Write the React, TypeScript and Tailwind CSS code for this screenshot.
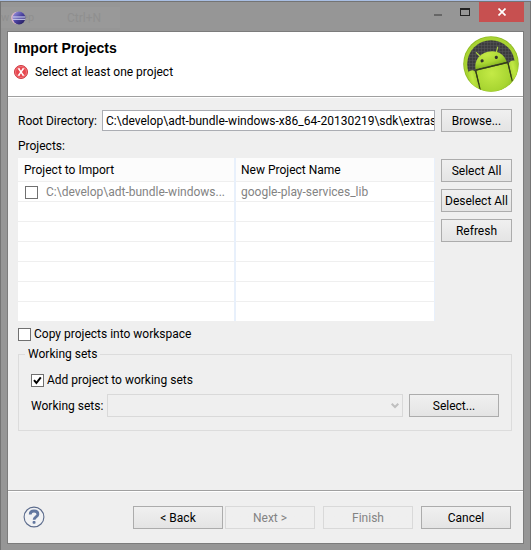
import type { ButtonHTMLAttributes, InputHTMLAttributes } from 'react'
import { clsx } from 'clsx'

function PushButton({ className, ...props }: ButtonHTMLAttributes<HTMLButtonElement>) {
  return (
    <button
      type="button"
      className={clsx(
        'h-[23px] shrink-0 border border-[#acacac] bg-linear-to-b from-[#f0f0f0] to-[#e4e4e4] text-center whitespace-nowrap text-black disabled:border-[#d9d9d9] disabled:from-[#efefef] disabled:to-[#efefef] disabled:text-[#838383]',
        className,
      )}
      {...props}
    />
  )
}

function CheckBox(props: InputHTMLAttributes<HTMLInputElement>) {
  return (
    <span className="relative block size-[13px] shrink-0">
      <input
        type="checkbox"
        className="peer block size-[13px] appearance-none border border-[#707070] bg-white"
        {...props}
      />
      <svg
        viewBox="0 0 13 13"
        className="pointer-events-none absolute inset-0 hidden size-[13px] peer-checked:block"
      >
        <path d="M3 6.2 5.4 9 9.8 3.4" fill="none" stroke="#000" strokeWidth="2" />
      </svg>
    </span>
  )
}

function EclipseIcon() {
  return (
    <svg viewBox="0 0 16 16" className="relative size-4">
      <defs>
        <linearGradient id="eclipse-ball" x1="0" y1="0" x2="1" y2="1">
          <stop offset="0" stopColor="#a59fe6" />
          <stop offset="0.5" stopColor="#4a429f" />
          <stop offset="1" stopColor="#1d1650" />
        </linearGradient>
      </defs>
      <circle cx="6.4" cy="8" r="6.2" fill="#e3b9c9" />
      <circle cx="8" cy="8" r="6.4" fill="url(#eclipse-ball)" />
      <path d="M1.8 7h12.4M1.8 9.3h12.4" stroke="#dfe3fa" strokeWidth="1.1" />
    </svg>
  )
}

function ErrorIcon() {
  return (
    <svg viewBox="0 0 14 14" className="size-[14px]">
      <circle cx="7" cy="7" r="6.5" fill="#e8474f" stroke="#cf3a42" />
      <circle cx="7" cy="7" r="5.5" fill="none" stroke="#f08a8e" strokeWidth="0.7" />
      <path d="M4.6 3.6 9.4 10.4M9.4 3.6 4.6 10.4" stroke="#fff" strokeWidth="1.6" />
      <path d="M3.8 3.6h2M8.4 3.6h2M3.8 10.4h2M8.4 10.4h2" stroke="#fff" strokeWidth="0.7" />
    </svg>
  )
}

function AndroidLogo() {
  return (
    <svg viewBox="0 0 56 56" className="size-14">
      <defs>
        <radialGradient id="android-body" cx="0.45" cy="0.2" r="0.9">
          <stop offset="0" stopColor="#c4ea46" />
          <stop offset="0.6" stopColor="#a9d632" />
          <stop offset="1" stopColor="#84b41e" />
        </radialGradient>
        <pattern id="android-mesh" width="3" height="3" patternUnits="userSpaceOnUse">
          <rect width="3" height="3" fill="#3c3c3e" />
          <path d="M0 0h3M0 0v3" stroke="#58585a" strokeWidth="1" />
        </pattern>
        <clipPath id="android-clip">
          <circle cx="28" cy="28" r="27.5" />
        </clipPath>
      </defs>
      <circle cx="28" cy="28" r="27.8" fill="#8fbb23" />
      <circle cx="28" cy="28" r="27" fill="#a8d332" />
      <circle cx="28" cy="28" r="23.8" fill="url(#android-mesh)" />
      <g clipPath="url(#android-clip)">
        <g transform="rotate(-13.5 29 30)" fill="url(#android-body)">
          <path d="M12.2 29.4C12.8 20.8 19.4 15.2 28.2 15.2s15.4 5.6 16 14.2z" />
          <path d="M12.6 31H44.6V62H12.6z" />
          <rect x="3.8" y="29.5" width="7.6" height="32" rx="3.8" />
          <rect x="45.8" y="29.5" width="7.6" height="32" rx="3.8" />
          <path d="M19.4 17.4 16.9 13.4M36.6 17.4 39 12.9" stroke="#b5dc42" strokeWidth="1.1" strokeLinecap="round" />
          <path d="M11.8 30.2H45.4M12 31V62M45.2 31V62" stroke="#33400f" strokeWidth="1.2" />
          <circle cx="20.6" cy="22.6" r="1.6" fill="#34342a" />
          <circle cx="35.2" cy="22.6" r="1.6" fill="#34342a" />
        </g>
      </g>
    </svg>
  )
}

function HelpIcon() {
  return (
    <svg viewBox="0 0 22 22" className="size-[22px]">
      <circle cx="11" cy="11" r="9.9" fill="#f1f2f4" stroke="#5b6b8c" strokeWidth="1.1" />
      <path d="M7.2 8.4C7.2 6.2 8.8 5 11 5s3.9 1.2 3.9 3.2c0 2.7-3.8 2.8-3.8 5.6" fill="none" stroke="#62779f" strokeWidth="2.8" />
      <rect x="9.6" y="15.1" width="2.9" height="2.7" rx="0.8" fill="#62779f" />
    </svg>
  )
}

function TitleBar() {
  return (
    <div className="flex h-[29px] items-start justify-between">
      <div className="relative mt-[5px] flex h-[21px] w-[119px] items-center bg-[#999] pl-[10px] text-[12px] text-[#8f8f8f]">
        <span className="absolute left-0 text-[11px] whitespace-nowrap">w Step</span>
        <EclipseIcon />
        <span className="ml-10">Ctrl+N</span>
      </div>
      <div className="mr-[6px] flex">
        <button type="button" aria-label="Minimize" className="flex h-5 w-[26px] justify-center">
          <span className="mt-3 h-[2px] w-2 bg-[#666]" />
        </button>
        <button type="button" aria-label="Maximize" className="flex h-5 w-[28px] justify-center">
          <span className="mt-[6px] h-2 w-[10px] border border-t-2 border-[#222]" />
        </button>
        <button type="button" aria-label="Close" className="flex h-5 w-[45px] items-center justify-center bg-[#c75050]">
          <svg viewBox="0 0 8 8" className="size-2">
            <path d="M0.5 0.5 7.5 7.5M7.5 0.5 0.5 7.5" stroke="#fff" strokeWidth="1.7" />
          </svg>
        </button>
      </div>
    </div>
  )
}

const emptyRows = [1, 2, 3, 4, 5]

function ProjectTable() {
  return (
    <table className="w-full table-fixed border-collapse bg-white text-left">
      <thead>
        <tr className="h-[23px] border-b border-[#efefef] bg-[#fcfcfc]">
          <th className="w-[217px] border-r-2 border-[#e8f0fb] p-0 pt-[2px] pl-[6px] font-normal">Project to Import</th>
          <th className="border-r border-[#e8f0fb] p-0 pt-[2px] pl-[5px] font-normal">New Project Name</th>
        </tr>
      </thead>
      <tbody>
        <tr className="h-5 border-b border-[#efefef] text-[#838383]">
          <td className="border-r-2 border-[#e8f0fb] p-0 pt-[2px] pl-[7px]">
            <label className="flex items-center gap-2">
              <CheckBox />
              <span className="truncate">C:\develop\adt-bundle-windows...</span>
            </label>
          </td>
          <td className="border-r border-[#e8f0fb] p-0 pt-[2px] pl-[5px]">google-play-services_lib</td>
        </tr>
        {emptyRows.map((row) => (
          <tr key={row} className="h-5 border-b border-[#efefef]">
            <td className="border-r-2 border-[#e8f0fb] p-0" />
            <td className="border-r border-[#e8f0fb] p-0" />
          </tr>
        ))}
        <tr className="h-5">
          <td className="border-r-2 border-[#e8f0fb] p-0" />
          <td className="border-r border-[#e8f0fb] p-0" />
        </tr>
      </tbody>
    </table>
  )
}

export default function App() {
  return (
    <div className="flex min-h-screen flex-col border-t border-[#a9bfe4] bg-[#969696] font-[Roboto,'Open_Sans',sans-serif] text-[12px] leading-4 text-black">
      <div className="flex grow flex-col border border-b-0 border-[#747474] pb-[6px]">
        <TitleBar />
        <main className="mx-[6px] flex grow flex-col border border-[#7c7c7c] bg-[#efefef]">
          {/* Banner */}
          <header className="flex h-[65px] items-start justify-between border-b border-[#a0a0a0] bg-white pr-1 pl-[6px]">
            <div>
              <h1 className="mt-2 font-['Liberation_Sans',sans-serif] text-[14px] leading-4 font-bold">Import Projects</h1>
              <p className="mt-2 flex items-center gap-[7px]">
                <ErrorIcon />
                Select at least one project
              </p>
            </div>
            <div className="mt-1">
              <AndroidLogo />
            </div>
          </header>

          <div className="grow border-t border-white pt-[11px] pr-[11px] pl-[10px]">
            {/* Root directory */}
            <div className="flex items-center gap-[6px]">
              <label htmlFor="root-directory" className="w-[78px] shrink-0 whitespace-nowrap">Root Directory:</label>
              <input
                id="root-directory"
                type="text"
                defaultValue="C:\develop\adt-bundle-windows-x86_64-20130219\sdk\extras"
                className="h-[21px] min-w-0 grow border border-[#abadb3] bg-white pl-[3px]"
              />
              <PushButton className="w-[71px]">Browse...</PushButton>
            </div>

            {/* Project list */}
            <p className="mt-[6px] mb-1">Projects:</p>
            <div className="flex items-start gap-[6px]">
              <div className="min-w-0 grow">
                <ProjectTable />
              </div>
              <div className="mt-px flex w-[71px] shrink-0 flex-col gap-[7px]">
                <PushButton>Select All</PushButton>
                <PushButton>Deselect All</PushButton>
                <PushButton>Refresh</PushButton>
              </div>
            </div>

            <label className="mt-[5px] flex items-center gap-[3px]">
              <CheckBox />
              Copy projects into workspace
            </label>

            <fieldset className="mt-1 border border-[#dcdcdc] pr-3 pb-[13px] pl-3">
              <legend className="-ml-[6px] px-[3px]">Working sets</legend>
              <label className="mt-[10px] flex items-center gap-[3px]">
                <CheckBox defaultChecked />
                Add project to working sets
              </label>
              <div className="mt-[6px] flex items-center">
                <label htmlFor="working-sets" className="w-[76px] shrink-0 whitespace-nowrap">Working sets:</label>
                <div className="relative min-w-0 grow">
                  <select
                    id="working-sets"
                    disabled
                    className="block h-[23px] w-full appearance-none border border-[#d9d9d9] bg-[#efefef]"
                  />
                  <svg viewBox="0 0 8 6" className="pointer-events-none absolute top-[9px] right-1 h-[6px] w-2">
                    <path d="M0.7 0.7 4 4 7.3 0.7" fill="none" stroke="#bfbfbf" strokeWidth="2" />
                  </svg>
                </div>
                <PushButton className="ml-[6px] w-[90px]">Select...</PushButton>
              </div>
            </fieldset>
          </div>

          {/* Wizard buttons */}
          <div className="border-t border-[#a0a0a0]">
            <div className="flex items-start border-t border-white pt-[14px] pr-3 pb-[14px] pl-[15px]">
              <button type="button" aria-label="Help">
                <HelpIcon />
              </button>
              <div className="ml-auto flex">
                <PushButton className="w-[90px]">&lt; Back</PushButton>
                <PushButton className="ml-[2px] w-[90px]" disabled>Next &gt;</PushButton>
                <PushButton className="ml-2 w-[90px]" disabled>Finish</PushButton>
                <PushButton className="ml-2 w-[90px]">Cancel</PushButton>
              </div>
            </div>
          </div>
        </main>
      </div>
    </div>
  )
}
